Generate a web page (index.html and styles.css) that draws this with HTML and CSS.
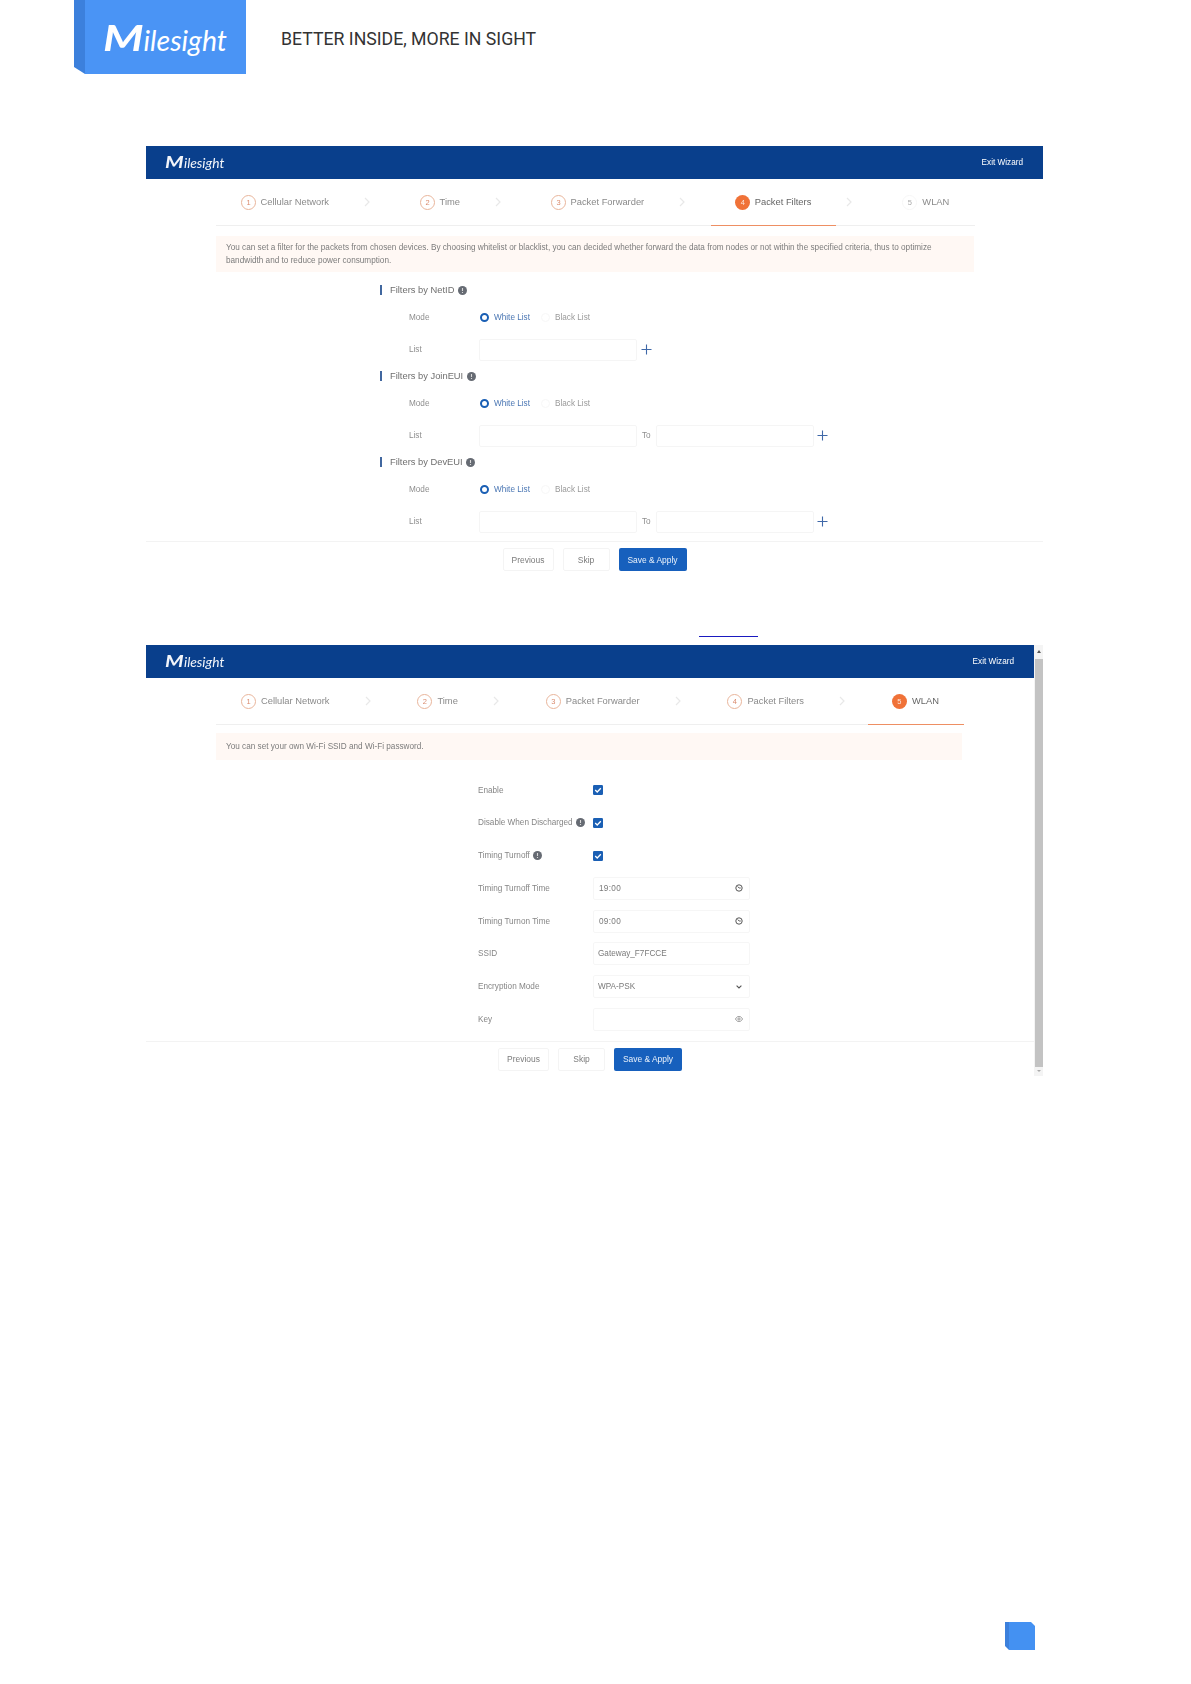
FILE: index.html
```html
<!DOCTYPE html>
<html lang="en">
<head>
<meta charset="utf-8">
<title>Milesight Wizard</title>
<link rel="stylesheet" href="styles.css">
</head>
<body>
<svg class="defs" width="0" height="0" aria-hidden="true">
  <symbol id="chev" viewBox="0 0 8 10"><path d="M2 1l4 4-4 4" fill="none" stroke="#e8e8e8" stroke-width="1.2"/></symbol>
  <symbol id="info" viewBox="0 0 10 10"><circle cx="5" cy="5" r="5" fill="#666b73"/><path d="M5 2.2v3.4M5 6.6v1.2" stroke="#d8d8d8" stroke-width="1.2"/></symbol>
  <symbol id="plus" viewBox="0 0 11 11"><path d="M5.5 .5v10M.5 5.5h10" fill="none" stroke="#3f68a8" stroke-width="1.1"/></symbol>
  <symbol id="check" viewBox="0 0 10 10"><rect width="10" height="10" rx="1.2" fill="#1a5fb4"/><path d="M2.2 5l2 2 3.6-3.8" fill="none" stroke="#fff" stroke-width="1.3"/></symbol>
  <symbol id="clock" viewBox="0 0 8 8"><circle cx="4" cy="4" r="3.2" fill="none" stroke="#444" stroke-width=".9"/><path d="M2.6 2.4L4 4h1.8" fill="none" stroke="#444" stroke-width=".8"/></symbol>
  <symbol id="down" viewBox="0 0 8 6"><path d="M1.6 1.6L4 4l2.4-2.4" fill="none" stroke="#555" stroke-width="1.1"/></symbol>
  <symbol id="eye" viewBox="0 0 9 7"><path d="M.5 3.5C2 1 3 .7 4.5.7S7 1 8.5 3.5C7 6 6 6.3 4.5 6.3S2 6 .5 3.5z" fill="none" stroke="#777" stroke-width=".8"/><circle cx="4.5" cy="3.5" r="1.3" fill="none" stroke="#777" stroke-width=".8"/></symbol>
</svg>

<header class="page-head">
  <div class="brand"><span class="brand-word"><span class="brand-m">M</span>ilesight</span></div>
  <div class="tagline">BETTER INSIDE, MORE IN SIGHT</div>
</header>

<section class="wizard wizard-filters">
  <div class="bar"><span class="bar-logo"><span class="bar-m">M</span>ilesight</span><span class="exit">Exit Wizard</span></div>
  <nav class="tabs tabs-filters">
    <div class="step"><span class="num">1</span><span class="label">Cellular Network</span><svg class="chev"><use href="#chev"/></svg></div>
    <div class="step"><span class="num">2</span><span class="label">Time</span><svg class="chev"><use href="#chev"/></svg></div>
    <div class="step"><span class="num">3</span><span class="label">Packet Forwarder</span><svg class="chev"><use href="#chev"/></svg></div>
    <div class="step active"><span class="num">4</span><span class="label">Packet Filters</span><svg class="chev"><use href="#chev"/></svg></div>
    <div class="step todo"><span class="num">5</span><span class="label">WLAN</span></div>
  </nav>
  <p class="alert alert-two">You can set a filter for the packets from chosen devices. By choosing whitelist or blacklist, you can decided whether forward the data from nodes or not within the specified criteria, thus to optimize bandwidth and to reduce power consumption.</p>

  <div class="filters">
    <h3 class="filter-title first">Filters by NetID <svg class="info"><use href="#info"/></svg></h3>
    <div class="mode"><span class="field-label">Mode</span><span class="radio on"></span><span class="radio-text on">White List</span><span class="radio"></span><span class="radio-text">Black List</span></div>
    <div class="list"><span class="field-label">List</span><span class="input"></span><svg class="plus"><use href="#plus"/></svg></div>

    <h3 class="filter-title">Filters by JoinEUI <svg class="info"><use href="#info"/></svg></h3>
    <div class="mode"><span class="field-label">Mode</span><span class="radio on"></span><span class="radio-text on">White List</span><span class="radio"></span><span class="radio-text">Black List</span></div>
    <div class="list"><span class="field-label">List</span><span class="input"></span><span class="to">To</span><span class="input"></span><svg class="plus"><use href="#plus"/></svg></div>

    <h3 class="filter-title">Filters by DevEUI <svg class="info"><use href="#info"/></svg></h3>
    <div class="mode"><span class="field-label">Mode</span><span class="radio on"></span><span class="radio-text on">White List</span><span class="radio"></span><span class="radio-text">Black List</span></div>
    <div class="list"><span class="field-label">List</span><span class="input"></span><span class="to">To</span><span class="input"></span><svg class="plus"><use href="#plus"/></svg></div>
  </div>

  <div class="foot foot-filters">
    <button class="btn btn-prev">Previous</button><button class="btn btn-skip">Skip</button><button class="btn btn-save">Save &amp; Apply</button>
  </div>
</section>

<div class="link-rule"></div>

<section class="wizard wizard-wlan">
  <div class="wlan-main">
    <div class="bar"><span class="bar-logo"><span class="bar-m">M</span>ilesight</span><span class="exit">Exit Wizard</span></div>
    <nav class="tabs tabs-wlan">
      <div class="step"><span class="num">1</span><span class="label">Cellular Network</span><svg class="chev"><use href="#chev"/></svg></div>
      <div class="step"><span class="num">2</span><span class="label">Time</span><svg class="chev"><use href="#chev"/></svg></div>
      <div class="step"><span class="num">3</span><span class="label">Packet Forwarder</span><svg class="chev"><use href="#chev"/></svg></div>
      <div class="step"><span class="num">4</span><span class="label">Packet Filters</span><svg class="chev"><use href="#chev"/></svg></div>
      <div class="step active"><span class="num">5</span><span class="label">WLAN</span></div>
    </nav>
    <p class="alert alert-one">You can set your own Wi-Fi SSID and Wi-Fi password.</p>

    <div class="wlan-form">
      <span class="wlan-label">Enable</span><svg class="check"><use href="#check"/></svg>
      <span class="wlan-label">Disable When Discharged <svg class="info"><use href="#info"/></svg></span><svg class="check"><use href="#check"/></svg>
      <span class="wlan-label">Timing Turnoff <svg class="info"><use href="#info"/></svg></span><svg class="check"><use href="#check"/></svg>
      <span class="wlan-label">Timing Turnoff Time</span><span class="box"><span class="time">19:00</span><svg class="ico"><use href="#clock"/></svg></span>
      <span class="wlan-label">Timing Turnon Time</span><span class="box"><span class="time">09:00</span><svg class="ico"><use href="#clock"/></svg></span>
      <span class="wlan-label">SSID</span><span class="box"><span>Gateway_F7FCCE</span></span>
      <span class="wlan-label">Encryption Mode</span><span class="box"><span>WPA-PSK</span><svg class="ico"><use href="#down"/></svg></span>
      <span class="wlan-label">Key</span><span class="box"><span></span><svg class="ico"><use href="#eye"/></svg></span>
    </div>

    <div class="foot foot-wlan">
      <button class="btn btn-prev">Previous</button><button class="btn btn-skip">Skip</button><button class="btn btn-save">Save &amp; Apply</button>
    </div>
  </div>
  <div class="scroll"><span class="arrow-up"></span><span class="thumb"></span><span class="arrow-down"></span></div>
</section>

<div class="corner"></div>
</body>
</html>
```

FILE: styles.css
```css
* { box-sizing: border-box; }
html, body { margin: 0; padding: 0; }
body { width: 1191px; height: 1684px; background: #fff; font-family: "Liberation Sans", Arial, sans-serif; overflow: hidden; }
.defs { display: block; height: 0; }

/* page header */
.page-head { display: flex; align-items: center; height: 74px; }
.brand { width: 172px; height: 74px; margin-left: 74px; padding: 18px 0 0 29px; background: linear-gradient(90deg, #3c80dc 0 11px, #4a94f5 11px); clip-path: polygon(0 0, 100% 0, 100% 100%, 11px 100%, 0 67px); color: #fff; }
.brand-word { font: italic 400 28.5px/38px "Lato", sans-serif; white-space: nowrap; }
.brand-m { display: inline-block; margin-right: 8px; font-size: 37px; font-weight: 700; transform: scaleX(1.25); transform-origin: left; }
.tagline { margin-left: 35px; padding-top: 4px; font: 400 17.7px/22px "Roboto", sans-serif; color: #333; white-space: nowrap; }

/* wizard frames */
.wizard { width: 897px; margin-left: 146px; filter: blur(.3px); }
.wizard-filters { margin-top: 72px; }
.bar { display: flex; justify-content: space-between; align-items: center; height: 33px; padding: 0 20px 0 19px; background: #093f8c; color: #fff; }
.bar-logo { font: italic 400 13.8px/18px "Lato", sans-serif; white-space: nowrap; color: #f2f5fa; }
.bar-m { display: inline-block; margin-right: 4px; font-size: 17px; font-weight: 700; transform: scaleX(1.25); transform-origin: left; }
.exit { font-size: 8.2px; }

/* steps */
.tabs { display: flex; align-items: center; height: 47px; margin-left: 70px; padding-left: 25px; border-bottom: 1px solid #efefef; }
.tabs-filters { width: 759px; --chev-after: 49px; }
.tabs-wlan { width: 748px; --chev-after: 45.9px; }
.step { position: relative; display: flex; align-items: center; height: 46px; color: #8a8a8a; font-size: 9.35px; white-space: nowrap; }
.num { display: flex; justify-content: center; align-items: center; width: 15px; height: 15px; margin-right: 4.5px; border: 1px solid #e8b49a; border-radius: 50%; color: #d98a6d; font-size: 7.5px; }
.tabs-wlan .num { margin-right: 5px; }
.chev { width: 8px; height: 10px; margin: 0 var(--chev-after) 0 34px; }
.step.active { color: #666; }
.step.active .num { border: 0; background: #f07238; color: #fde6da; }
.step.active::after { content: ""; position: absolute; bottom: -1px; height: 1px; background: #ee8f63; }
.tabs-filters .step.active::after { left: -24px; width: 125px; }
.tabs-wlan .step.active::after { left: -24px; width: 96px; }
.step.todo .num { border-color: #f6f6f6; color: #aaa; }
.tabs-filters .step.todo .num { margin-right: 5px; }

/* alert */
.alert { margin: 10px 0 0 70px; padding: 0 10px; background: #fff8f4; color: #7c7c7c; font-size: 8.2px; line-height: 13px; }
.alert-two { width: 758px; height: 36px; padding-top: 5px; }
.alert-one { width: 746px; height: 27px; margin-top: 8px; padding-top: 7px; }

/* filter forms */
.filters { padding-left: 234px; }
.filter-title { display: flex; align-items: center; height: 16px; margin: 7px 0 0; padding-left: 10px; border-left: 0; position: relative; color: #6f6f6f; font-size: 9.35px; font-weight: 400; white-space: pre; }
.filter-title::before { content: ""; position: absolute; left: 0; top: 3px; width: 1.5px; height: 10px; background: #41679f; }
.filter-title.first { margin-top: 10px; }
.info { width: 9px; height: 9px; margin-left: 1px; }
.mode { display: flex; align-items: center; height: 16px; margin-top: 11px; font-size: 8.2px; }
.field-label { width: 70px; margin-left: 29px; color: #8e8e8e; }
.list .field-label { margin-bottom: 1px; }
.radio { width: 9px; height: 9px; margin-right: 5px; border: 1px solid #f6f6f6; border-radius: 50%; }
.radio.on { margin-left: 1px; border: 2.5px solid #1a5fb4; }
.radio-text { width: 47px; color: #9a9a9a; }
.radio-text.on { color: #4a76b3; }
.list { display: flex; align-items: center; height: 22px; margin-top: 14px; font-size: 8.2px; }
.input { width: 158px; height: 22px; border: 1px solid #f5f5f5; border-radius: 2px; }
.to { width: 18.7px; padding-left: 5px; margin-bottom: 1px; color: #8e8e8e; }
.plus { width: 11px; height: 11px; margin: 0 0 1px 3.5px; }

/* footers */
.foot { display: flex; justify-content: center; gap: 9px; border-top: 1px solid #f3f3f3; }
.foot-filters { margin-top: 8px; padding-top: 6px; }
.foot-wlan { margin-top: 10px; padding-top: 6px; }
.btn { height: 23px; padding: 0; border: 1px solid #f4f4f4; border-radius: 2px; background: #fff; color: #7c7c7c; font: 400 8.45px "Liberation Sans", Arial, sans-serif; }
.btn-prev { width: 51px; }
.btn-skip { width: 47px; }
.btn-save { width: 68px; border: 0; background: #1760bd; color: #e9f1fb; }

.link-rule { width: 59px; height: 1px; margin: 65px 0 0 699px; background: #1a1ac0; }

/* WLAN wizard */
.wizard-wlan { display: flex; height: 431px; margin-top: 8px; }
.wlan-main { width: 888px; }
.wlan-form { display: grid; grid-template-columns: 115px 157px; grid-auto-rows: 23px; row-gap: 9.75px; align-items: center; margin: 18.5px 0 0 332px; font-size: 8.2px; color: #868686; }
.wlan-label { display: flex; align-items: center; white-space: pre; }
.check { width: 10px; height: 10px; }
.box { display: flex; justify-content: space-between; align-items: center; height: 23px; padding: 0 6px 0 4px; border: 1px solid #f6f6f6; border-radius: 2px; color: #7a7a7a; }
.time { padding-left: 1px; letter-spacing: .3px; }
.ico { width: 8px; height: 8px; }

/* scrollbar */
.scroll { display: flex; flex-direction: column; align-items: center; width: 9px; height: 431px; background: #f4f4f4; }
.arrow-up { height: 0; margin: 5px 0 6px; border: 2.5px solid transparent; border-top: 0; border-bottom: 3px solid #555; }
.thumb { width: 8px; height: 408px; background: #c3c3c3; }
.arrow-down { height: 0; margin-top: 3px; border: 2px solid transparent; border-bottom: 0; border-top: 2.5px solid #aaa; }

.corner { width: 30px; height: 28px; margin: 546px 0 0 1005px; background: linear-gradient(90deg, #3c80dc 0 4px, #4491f2 4px); clip-path: polygon(0 0, 26px 0, 100% 4px, 100% 100%, 4px 100%, 0 24px); }
```
